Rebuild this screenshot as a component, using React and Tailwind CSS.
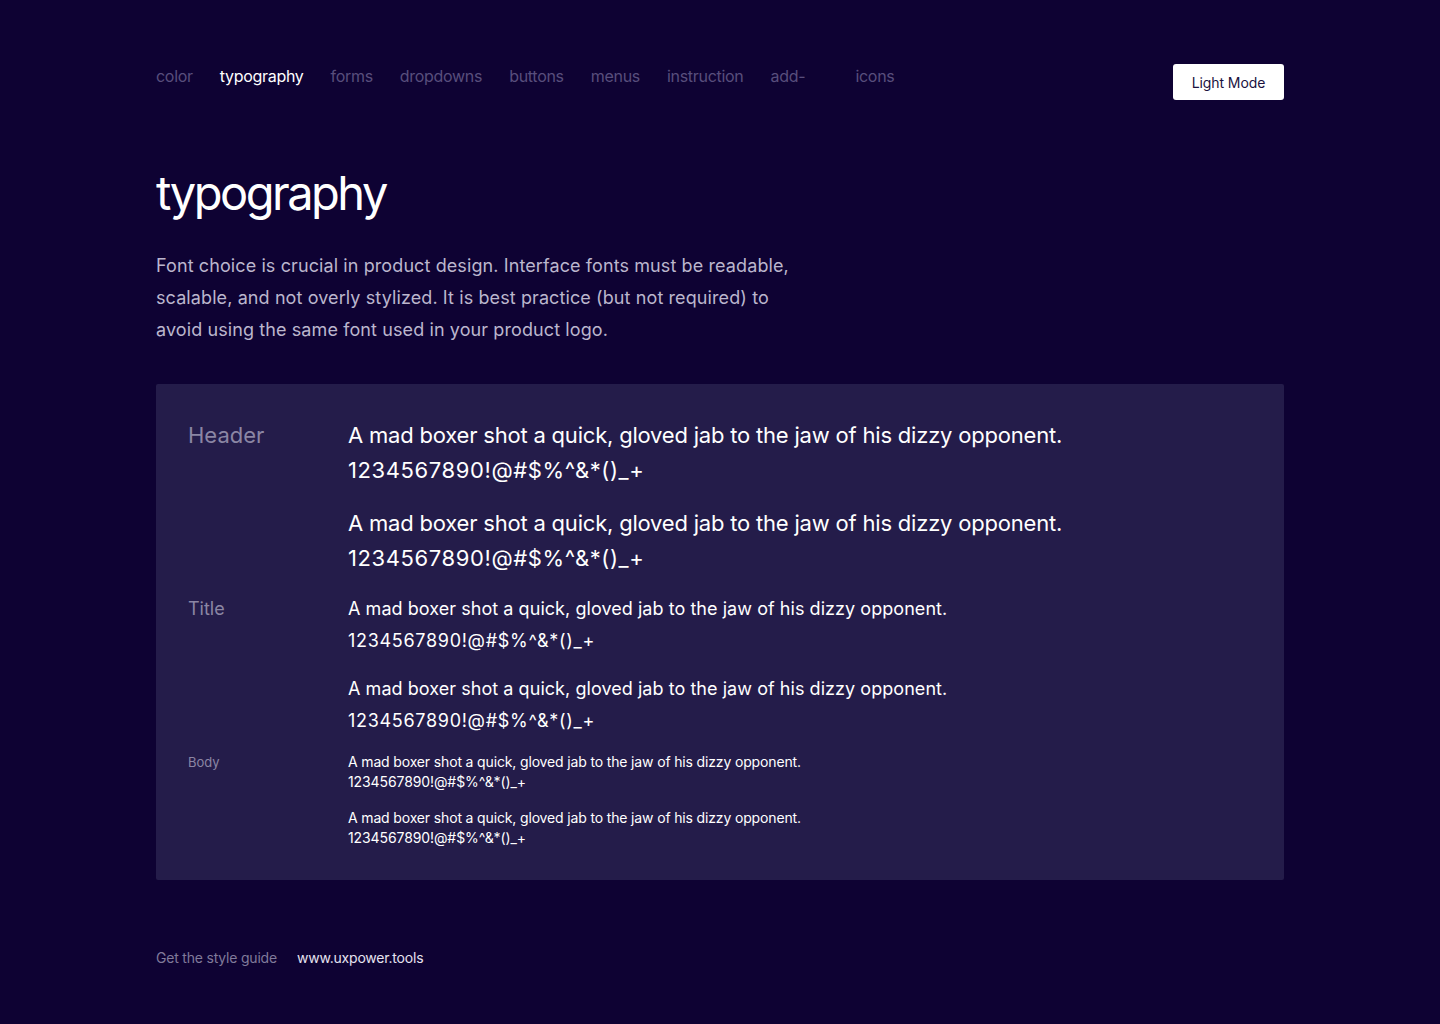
import React from 'react';

const navItems = ['color', 'typography', 'forms', 'dropdowns', 'buttons', 'menus', 'instruction', 'add-', 'icons'];

const SAMPLE = 'A mad boxer shot a quick, gloved jab to the jaw of his dizzy opponent.';
const CHARS = '1234567890!@#$%^&*()_+';

const sections = [
  {
    label: 'Header',
    wrap: 'gap-[18px]',
    labelClass: 'text-[22px] leading-[35px]',
    textClass: 'text-[22px] leading-[35px]',
    sampleClass: 'tracking-[-0.2px]',
    charsClass: 'tracking-[0.6px]',
  },
  {
    label: 'Title',
    wrap: 'gap-4',
    labelClass: 'text-[18px] leading-[32px]',
    textClass: 'text-[18px] leading-[32px]',
    sampleClass: 'tracking-[0.05px]',
    charsClass: 'tracking-[0.7px]',
  },
  {
    label: 'Body',
    wrap: 'gap-4',
    labelClass: 'text-[13px] leading-[20px]',
    textClass: 'text-[14px] leading-[20px]',
    sampleClass: 'tracking-[-0.15px]',
    charsClass: 'tracking-[-0.1px]',
  },
];

export default function App() {
  return (
    <div
      className="min-h-screen w-full bg-[#0e0233] text-white"
      style={{ fontFamily: 'Inter, "Noto Sans", sans-serif' }}
    >
      <div className="mx-auto w-[1128px] pt-16 pb-10">
        {/* Top bar */}
        <div className="flex items-start justify-between">
          <nav className="flex text-[16px] leading-6 tracking-[-0.3px]">
            {navItems.map((item) => (
              <a
                key={item}
                className={`mr-[27px] ${item === 'add-' ? 'w-[58px]' : ''} ${
                  item === 'typography' ? 'text-white' : 'text-[#584e7c]'
                }`}
              >
                {item}
              </a>
            ))}
          </nav>
          <button className="h-9 w-[111px] rounded-[3px] bg-white text-[14px] tracking-[-0.1px] text-[#1a1240]">
            Light Mode
          </button>
        </div>

        {/* Heading */}
        <h1 className="mt-[69px] text-[47px] leading-[48px] tracking-[-2.5px]">typography</h1>
        <p className="mt-[33px] w-[640px] text-[18px] leading-8 tracking-[0.1px] text-[#bbb6cd]">
          Font choice is crucial in product design. Interface fonts must be readable, scalable, and not overly
          stylized. It is best practice (but not required) to avoid using the same font used in your product logo.
        </p>

        {/* Samples card */}
        <div className="mt-[38px] rounded-[2px] bg-[#241c4a] px-8 pt-[34px] pb-8">
          <div className="flex flex-col">
            {sections.map((s, idx) => (
              <div
                key={s.label}
                className={`flex ${idx === 1 ? 'mt-[17px]' : ''} ${idx === 2 ? 'mt-[15px]' : ''}`}
              >
                <div className={`w-[160px] shrink-0 text-[#8b86a4] ${s.labelClass}`}>{s.label}</div>
                <div className={`flex flex-col ${s.wrap}`}>
                  {[0, 1].map((i) => (
                    <div key={i} className={`text-white ${s.textClass}`}>
                      <div className={s.sampleClass}>{SAMPLE}</div>
                      <div className={s.charsClass}>{CHARS}</div>
                    </div>
                  ))}
                </div>
              </div>
            ))}
          </div>
        </div>

        {/* Footer */}
        <div className="mt-[68px] flex gap-5 text-[14px] leading-5 tracking-[-0.2px]">
          <span className="text-[#807a9a]">Get the style guide</span>
          <a className="text-[#e6e3f0]">www.uxpower.tools</a>
        </div>
      </div>
    </div>
  );
}
